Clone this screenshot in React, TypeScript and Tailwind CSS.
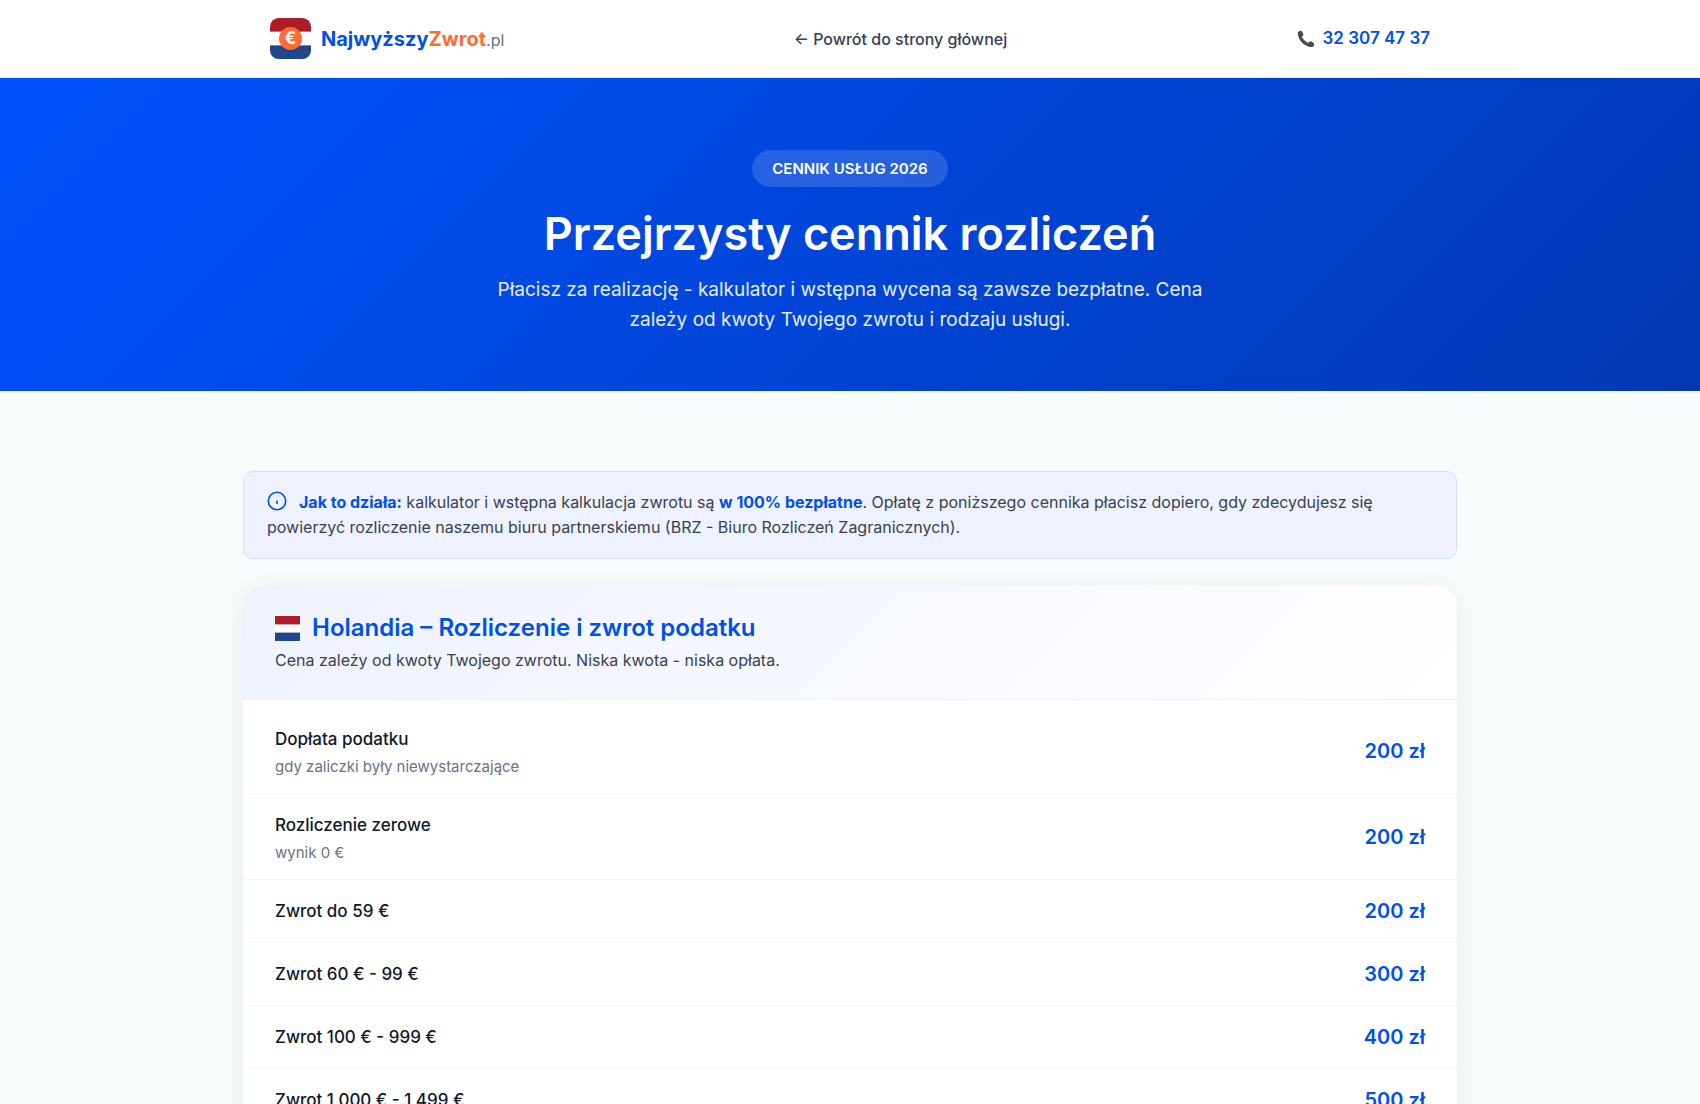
type Price = { label: string; note?: string; price: string };

const prices: Price[] = [
  { label: "Dopłata podatku", note: "gdy zaliczki były niewystarczające", price: "200 zł" },
  { label: "Rozliczenie zerowe", note: "wynik 0 €", price: "200 zł" },
  { label: "Zwrot do 59 €", price: "200 zł" },
  { label: "Zwrot 60 € - 99 €", price: "300 zł" },
  { label: "Zwrot 100 € - 999 €", price: "400 zł" },
  { label: "Zwrot 1 000 € - 1 499 €", price: "500 zł" },
];

function LogoMark() {
  return (
    <svg viewBox="0 0 40 40" className="size-[41px]" aria-hidden="true">
      <defs>
        <clipPath id="logo-clip">
          <rect width="40" height="40" rx="8.5" />
        </clipPath>
      </defs>
      <g clipPath="url(#logo-clip)">
        <rect width="40" height="40" fill="#fff" />
        <rect width="40" height="13.3" fill="#ae1c28" />
        <rect y="26.7" width="40" height="13.3" fill="#21468b" />
      </g>
      <circle cx="20" cy="20" r="11.2" fill="#ff6b35" />
      <text
        x="19.8"
        y="25.8"
        textAnchor="middle"
        fill="#fff"
        fontSize="16.5"
        fontWeight="700"
        fontFamily="Inter, sans-serif"
      >
        €
      </text>
    </svg>
  );
}

function Handset() {
  return (
    <svg viewBox="0 0 18 18" className="size-[18px]" aria-hidden="true">
      <path
        d="M2.4 5C3.8 9.6 8 14 13 15.4"
        fill="none"
        stroke="#4d4d4d"
        strokeWidth="3.2"
        strokeLinecap="round"
      />
      <rect x="-2.9" y="-2.3" width="5.8" height="4.6" rx="1.6" fill="#4a4a4a" transform="translate(3.6 3.8) rotate(62)" />
      <rect x="-2.9" y="-2.3" width="5.8" height="4.6" rx="1.6" fill="#4a4a4a" transform="translate(14.2 14.2) rotate(28)" />
    </svg>
  );
}

function InfoIcon() {
  return (
    <svg viewBox="0 0 20 20" className="mr-3 inline size-5 align-[-3px]" fill="none" stroke="#0050e6" aria-hidden="true">
      <circle cx="10" cy="10" r="8.7" strokeWidth="1.6" />
      <path d="M10 10v2.4" strokeWidth="1.6" strokeLinecap="round" />
    </svg>
  );
}

function DutchFlag() {
  return (
    <svg viewBox="0 0 25 25" className="size-[25px]" aria-hidden="true">
      <rect width="25" height="25" fill="#fff" />
      <rect width="25" height="8.4" fill="#ae1c28" />
      <rect y="16.6" width="25" height="8.4" fill="#21468b" />
    </svg>
  );
}

export default function App() {
  return (
    <div className="h-screen overflow-hidden bg-[#f8fbfc] font-['Inter',sans-serif] text-[#1a1a2e]">
      <header className="border-b border-[#e5e7eb] bg-white">
        <div className="mx-auto flex h-[77px] max-w-[1214px] items-center justify-between px-[27px]">
          <a href="#" className="flex items-center gap-[10px]">
            <LogoMark />
            <span className="text-xl font-bold text-[#0050e6]">
              Najwyższy<span className="text-[#ff6b35]">Zwrot</span>
              <span className="text-base font-normal text-[#6b7280]">.pl</span>
            </span>
          </a>
          <a href="#" className="text-base font-medium text-[#374151]">
            ← Powrót do strony głównej
          </a>
          <a href="tel:323074737" className="flex items-center gap-2 text-[17px] font-semibold text-[#0050e6]">
            <Handset />
            32 307 47 37
          </a>
        </div>
      </header>

      <section className="bg-[linear-gradient(135deg,#0052ff_0%,#0039b3_100%)] pt-[72px] pb-[56px] text-center text-white">
        <span className="inline-block rounded-full bg-white/15 px-5 py-2 text-[15px] leading-[21px] font-semibold">
          CENNIK USŁUG 2026
        </span>
        <h1 className="mt-4 text-[45px] leading-[62px] font-semibold">Przejrzysty cennik rozliczeń</h1>
        <p className="mx-auto mt-[10px] max-w-[730px] text-[19px] leading-[30px] text-white/90">
          Płacisz za realizację - kalkulator i wstępna wycena są zawsze bezpłatne. Cena zależy od kwoty Twojego zwrotu i
          rodzaju usługi.
        </p>
      </section>

      <main className="mx-auto max-w-[1214px] pt-20">
        <p className="rounded-[10px] border border-[#d3dff5] bg-[#eef2ff] px-[23px] py-[18px] text-base leading-[25px] text-[#374151]">
          <InfoIcon />
          <strong className="font-bold text-[#0050e6]">Jak to działa:</strong> kalkulator i wstępna kalkulacja zwrotu są{" "}
          <strong className="font-bold text-[#0050e6]">w 100% bezpłatne</strong>. Opłatę z poniższego cennika płacisz
          dopiero, gdy zdecydujesz się powierzyć rozliczenie naszemu biuru partnerskiemu (BRZ - Biuro Rozliczeń
          Zagranicznych).
        </p>

        <section className="mt-[27px] overflow-hidden rounded-[20px] bg-white shadow-[0_4px_24px_rgba(0,0,0,0.06)]">
          <div className="border-b border-[#eef1f5] bg-[linear-gradient(135deg,#eef2ff_0%,#ffffff_100%)] px-8 pt-[26px] pb-[27px]">
            <h2 className="flex items-center gap-3 text-2xl leading-8 font-semibold text-[#0050e6]">
              <DutchFlag />
              Holandia – Rozliczenie i zwrot podatku
            </h2>
            <p className="mt-1 text-base leading-6 text-[#374151]">
              Cena zależy od kwoty Twojego zwrotu. Niska kwota - niska opłata.
            </p>
          </div>
          <table className="mt-2 w-full">
            <tbody>
              {prices.map((row) => (
                <tr key={row.label} className="border-b border-[#f3f4f6]">
                  <th scope="row" className="py-[17px] pl-8 text-left font-normal">
                    <span className="block text-[17px] leading-[28px] font-medium text-[#111827]">{row.label}</span>
                    {row.note && <span className="block pt-1 text-[15px] leading-[19px] text-[#6b7280]">{row.note}</span>}
                  </th>
                  <td className="pr-8 text-right text-[20px] font-semibold text-[#0050e6]">{row.price}</td>
                </tr>
              ))}
            </tbody>
          </table>
        </section>
      </main>
    </div>
  );
}
